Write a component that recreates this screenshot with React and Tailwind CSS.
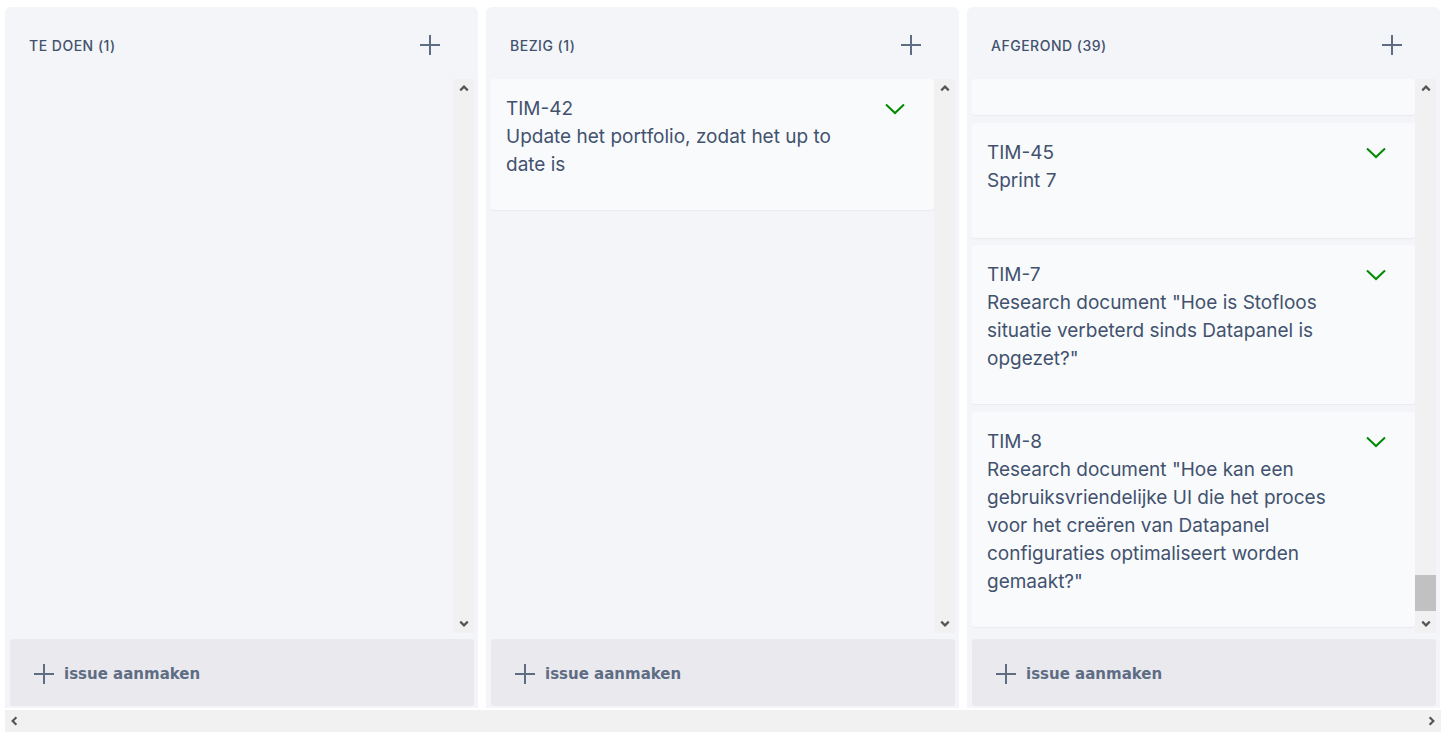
import React from "react";

const Plus = ({ className }) => (
  <svg viewBox="0 0 20 20" className={className} fill="none" stroke="currentColor" strokeWidth="2">
    <path d="M10 0v20M0 10h20" />
  </svg>
);

const Check = () => (
  <svg viewBox="0 0 20 12" className="w-[20px] h-[12px] text-[#008a00]" fill="none" stroke="currentColor" strokeWidth="2">
    <path d="M1 1.5l9 8.5 9-8.5" />
  </svg>
);

const Arrow = ({ dir }) => {
  const d = {
    up: "M1 5l3.5-3.5L8 5",
    down: "M1 1.5L4.5 5 8 1.5",
    left: "M5 1L1.5 4.5 5 8",
    right: "M1.5 1L5 4.5 1.5 8",
  }[dir];
  const v = dir === "up" || dir === "down" ? "0 0 9 6.5" : "0 0 6.5 9";
  const c = dir === "up" || dir === "down" ? "w-[10px] h-[7px]" : "w-[7px] h-[10px]";
  return (
    <svg viewBox={v} className={c} fill="none" stroke="#555" strokeWidth="2">
      <path d={d} />
    </svg>
  );
};

const VScroll = ({ thumb }) => (
  <div className="w-[21px] bg-[#f1f1f1] flex flex-col items-center justify-between py-[6px] relative">
    <Arrow dir="up" />
    {thumb && <div className="absolute left-0 right-0 top-[496px] h-[36px] bg-[#c1c1c1]" />}
    <Arrow dir="down" />
  </div>
);

const Card = ({ id, title, partial }) => {
  if (partial) return <div className="h-[36px] bg-[#f9fafc] rounded-[3px] shadow-[0_1px_1px_rgba(9,30,66,0.05)] shrink-0" />;
  return (
    <div className="bg-[#f9fafc] rounded-[3px] shadow-[0_1px_1px_rgba(9,30,66,0.05)] min-h-[115px] pl-[15px] pr-[29px] pt-[16px] pb-[31px] flex justify-between shrink-0">
      <div className="w-[352px] text-[19px] leading-[28px] text-[#42526e]">
        <div>{id}</div>
        <div>{title}</div>
      </div>
      <div className="pt-[8px]">
        <Check />
      </div>
    </div>
  );
};

const Column = ({ title, cards, thumb }) => (
  <div className="w-[473px] shrink-0 bg-[#f4f5f8] rounded-t-[6px] flex flex-col h-[701px]">
    <div className="h-[72px] shrink-0 flex items-center justify-between pl-[24px] pr-[38px] pt-[4px]">
      <span className="text-[14px] font-medium text-[#42526e] tracking-[0.5px]">{title}</span>
      <Plus className="w-[20px] h-[20px] text-[#5e6c84]" />
    </div>
    <div className="flex h-[554px] shrink-0 pl-[5px] pr-[4px]">
      <div className="flex-1 flex flex-col gap-[7.5px] overflow-hidden">
        {cards.map((c, i) => (
          <Card key={i} {...c} />
        ))}
      </div>
      <VScroll thumb={thumb} />
    </div>
    <div className="mt-[6px] ml-[5px] mr-[4px] h-[67px] bg-[#e9e9ee] rounded-[3px] flex items-center pl-[24px] pt-[3px]">
      <Plus className="w-[20px] h-[20px] text-[#5e6c84]" />
      <span className="ml-[10px] text-[15px] font-bold text-[#5e6c84]" style={{ fontFamily: '"DejaVu Sans", Verdana, sans-serif' }}>
        issue aanmaken
      </span>
    </div>
  </div>
);

export default function App() {
  return (
    <div className="w-[1441px] h-[736px] bg-white overflow-hidden" style={{ fontFamily: 'Inter, "Noto Sans", sans-serif' }}>
      <div className="pt-[7px] pl-[5px] flex gap-[8px]">
        <Column title="TE DOEN (1)" cards={[]} />
        <Column
          title="BEZIG (1)"
          cards={[{ id: "TIM-42", title: "Update het portfolio, zodat het up to date is" }]}
        />
        <Column
          title="AFGEROND (39)"
          thumb
          cards={[
            { partial: true },
            { id: "TIM-45", title: "Sprint 7" },
            { id: "TIM-7", title: 'Research document "Hoe is Stofloos situatie verbeterd sinds Datapanel is opgezet?"' },
            {
              id: "TIM-8",
              title:
                'Research document "Hoe kan een gebruiksvriendelijke UI die het proces voor het creëren van Datapanel configuraties optimaliseert worden gemaakt?"',
            },
          ]}
        />
      </div>
      <div className="ml-[5px] mt-[2px] h-[22px] bg-[#f1f1f1] flex items-center justify-between px-[6px]">
        <Arrow dir="left" />
        <Arrow dir="right" />
      </div>
    </div>
  );
}
